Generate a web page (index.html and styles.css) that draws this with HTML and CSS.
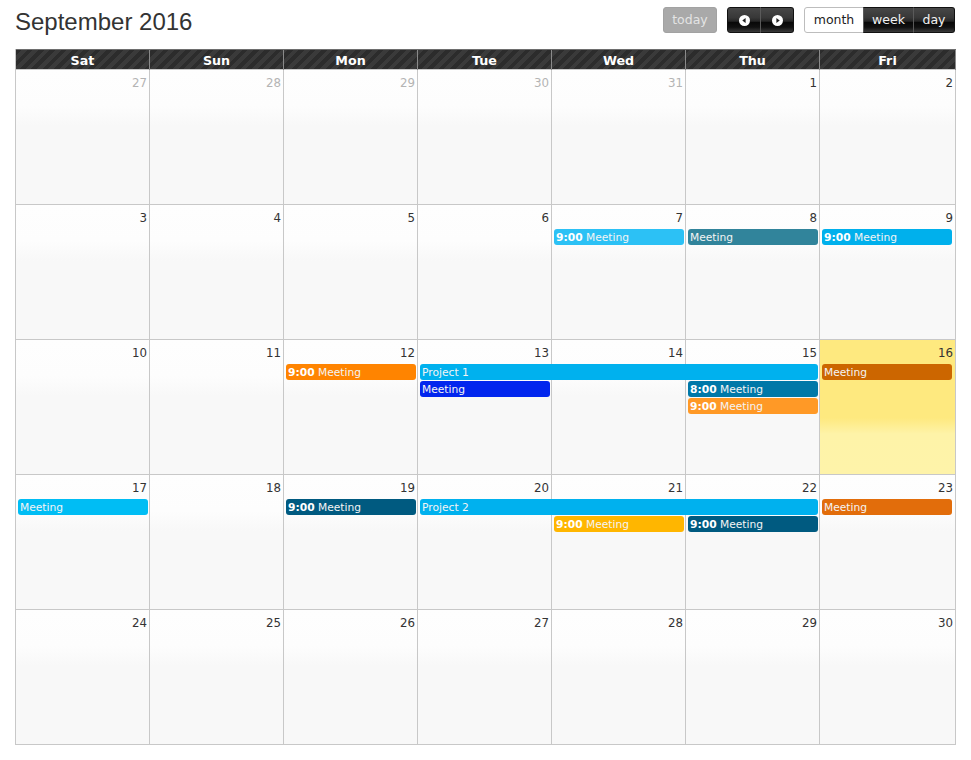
FILE: index.html
```html
<!DOCTYPE html>
<html>
<head>
<meta charset="utf-8">
<link rel="stylesheet" href="styles.css">
</head>
<body>
<div class="cal">
  <div class="toolbar">
    <h2 class="title">September 2016</h2>
    <div class="controls">
      <button class="btn today">today</button>
      <div class="group">
        <button class="btn dark nav"><svg width="11" height="11" viewBox="0 0 11 11"><circle cx="5.5" cy="5.5" r="5.5" fill="#fff"/><polygon points="3.3,5.5 6.6,3 6.6,8" fill="#222"/></svg></button>
        <button class="btn dark nav"><svg width="11" height="11" viewBox="0 0 11 11"><circle cx="5.5" cy="5.5" r="5.5" fill="#fff"/><polygon points="7.7,5.5 4.4,3 4.4,8" fill="#222"/></svg></button>
      </div>
      <div class="group">
        <button class="btn light">month</button>
        <button class="btn dark">week</button>
        <button class="btn dark">day</button>
      </div>
    </div>
  </div>

  <div class="grid">
    <div class="head">
      <div>Sat</div><div>Sun</div><div>Mon</div><div>Tue</div><div>Wed</div><div>Thu</div><div>Fri</div>
    </div>

    <div class="week">
      <div class="bg c1"></div><div class="bg c2"></div><div class="bg c3"></div><div class="bg c4"></div><div class="bg c5"></div><div class="bg c6"></div><div class="bg c7"></div>
      <div class="num other c1">27</div><div class="num other c2">28</div><div class="num other c3">29</div><div class="num other c4">30</div><div class="num other c5">31</div><div class="num c6">1</div><div class="num c7">2</div>
    </div>

    <div class="week">
      <div class="bg c1"></div><div class="bg c2"></div><div class="bg c3"></div><div class="bg c4"></div><div class="bg c5"></div><div class="bg c6"></div><div class="bg c7"></div>
      <div class="num c1">3</div><div class="num c2">4</div><div class="num c3">5</div><div class="num c4">6</div><div class="num c5">7</div><div class="num c6">8</div><div class="num c7">9</div>
      <div class="ev c5 r2 e-sky"><b>9:00</b> Meeting</div>
      <div class="ev c6 r2 e-teal">Meeting</div>
      <div class="ev c7 r2 e-cyan"><b>9:00</b> Meeting</div>
    </div>

    <div class="week">
      <div class="bg c1"></div><div class="bg c2"></div><div class="bg c3"></div><div class="bg c4"></div><div class="bg c5"></div><div class="bg c6"></div><div class="bg c7 today-bg"></div>
      <div class="num c1">10</div><div class="num c2">11</div><div class="num c3">12</div><div class="num c4">13</div><div class="num c5">14</div><div class="num c6">15</div><div class="num c7">16</div>
      <div class="ev c3 r2 e-orange"><b>9:00</b> Meeting</div>
      <div class="ev c4 span3 r2 e-project">Project 1</div>
      <div class="ev c7 r2 e-brown">Meeting</div>
      <div class="ev c4 r3 e-blue">Meeting</div>
      <div class="ev c6 r3 e-ocean"><b>8:00</b> Meeting</div>
      <div class="ev c6 r4 e-amber"><b>9:00</b> Meeting</div>
    </div>

    <div class="week">
      <div class="bg c1"></div><div class="bg c2"></div><div class="bg c3"></div><div class="bg c4"></div><div class="bg c5"></div><div class="bg c6"></div><div class="bg c7"></div>
      <div class="num c1">17</div><div class="num c2">18</div><div class="num c3">19</div><div class="num c4">20</div><div class="num c5">21</div><div class="num c6">22</div><div class="num c7">23</div>
      <div class="ev c1 r2 e-light">Meeting</div>
      <div class="ev c3 r2 e-navy"><b>9:00</b> Meeting</div>
      <div class="ev c4 span3 r2 e-project">Project 2</div>
      <div class="ev c7 r2 e-rust">Meeting</div>
      <div class="ev c5 r3 e-yellow"><b>9:00</b> Meeting</div>
      <div class="ev c6 r3 e-navy"><b>9:00</b> Meeting</div>
    </div>

    <div class="week">
      <div class="bg c1"></div><div class="bg c2"></div><div class="bg c3"></div><div class="bg c4"></div><div class="bg c5"></div><div class="bg c6"></div><div class="bg c7"></div>
      <div class="num c1">24</div><div class="num c2">25</div><div class="num c3">26</div><div class="num c4">27</div><div class="num c5">28</div><div class="num c6">29</div><div class="num c7">30</div>
    </div>
  </div>
</div>
</body>
</html>
```

FILE: styles.css
```css
html, body {
  margin: 0;
  padding: 0;
  background: #fff;
}

.cal {
  padding: 7px 16px 0 15px;
  font-family: "DejaVu Sans", Verdana, sans-serif;
}

.toolbar {
  display: flex;
  justify-content: space-between;
  align-items: flex-start;
  height: 26px;
  margin-bottom: 16px;
}

.title {
  margin: 0;
  font-family: "Liberation Sans", Arial, sans-serif;
  font-weight: normal;
  font-size: 24px;
  line-height: 29px;
  color: #333;
}

.controls {
  display: flex;
  gap: 10px;
}

.group {
  display: flex;
}

.btn {
  height: 26px;
  margin: 0;
  padding: 0 8px;
  font-family: "DejaVu Sans", Verdana, sans-serif;
  font-size: 12.5px;
  line-height: 24px;
  border: 1px solid #9c9c9c;
  border-radius: 3px;
  cursor: pointer;
}

.btn.today {
  width: 54px;
  padding: 0;
  background: #a9a9a9;
  border-color: #a2a2a2;
  color: #e4e4e4;
}

.btn.dark {
  color: #f2f2f2;
  border-color: #111;
  background: linear-gradient(#474747 0%, #383838 40%, #262626 55%, #080808 60%, #111 80%, #3a3a3a 100%);
}

.btn.light {
  color: #222;
  background: #fff;
  border-color: #bdbdbd;
  width: 60px;
  padding: 0;
}

.group .btn {
  border-radius: 0;
}

.group .btn + .btn {
  border-left-color: #5a5a5a;
  margin-left: -1px;
}

.group .btn:first-child {
  border-radius: 3px 0 0 3px;
}

.group .btn:last-child {
  border-radius: 0 3px 3px 0;
}

.btn.nav {
  width: 34px;
  padding: 0;
  display: flex;
  align-items: center;
  justify-content: center;
}

.group .btn.dark:nth-child(2) {
  width: 51px;
  padding: 0;
}

.group .btn.dark:nth-child(3) {
  width: 42px;
  padding: 0;
}

.group .btn.nav:nth-child(2) {
  width: 34px;
}

.grid {
  border-left: 1px solid #c8c8c8;
  width: 940px;
}

.head {
  display: grid;
  grid-template-columns: repeat(6, 134px) 136px;
  height: 19px;
  border-top: 1px solid #6e6e6e;
  border-bottom: 1px solid #c8c8c8;
  background: repeating-linear-gradient(135deg, #2c2c2c 0 4px, #3a3a3a 4px 8px);
}

.head div {
  box-sizing: border-box;
  border-right: 1px solid #8a8a8a;
  color: #fff;
  font-weight: bold;
  font-size: 12.7px;
  line-height: 21px;
  text-align: center;
}

.week {
  display: grid;
  grid-template-columns: repeat(6, 134px) 136px;
  grid-template-rows: 23px 17px 17px 17px 1fr;
  height: 134px;
  border-bottom: 1px solid #c8c8c8;
}

.bg {
  grid-row: 1 / -1;
  box-sizing: border-box;
  border-right: 1px solid #c8c8c8;
  background: linear-gradient(#fefefe 0, #fdfdfd 36px, #f8f8f8 56px, #f8f8f8 100%);
}

.bg.today-bg {
  background: linear-gradient(#fee97f 0, #fee97f 78px, #fef3a8 94px, #fef3a9 100%);
}

.c1 { grid-column: 1; }
.c2 { grid-column: 2; }
.c3 { grid-column: 3; }
.c4 { grid-column: 4; }
.c5 { grid-column: 5; }
.c6 { grid-column: 6; }
.c7 { grid-column: 7; }
.c4.span3 { grid-column: 4 / span 3; }

.num {
  grid-row: 1;
  padding: 6px 3px 0 0;
  text-align: right;
  font-size: 11.8px;
  line-height: 14px;
  color: #333;
}

.num.other {
  color: #b4b4b4;
}

.r2 { grid-row: 2; }
.r3 { grid-row: 3; }
.r4 { grid-row: 4; }

.ev {
  align-self: start;
  box-sizing: border-box;
  height: 16px;
  margin: 1px 2px 0 2px;
  padding: 1px 2px 0;
  border-radius: 3px;
  color: #f4f4f4;
  font-size: 10.7px;
  line-height: 15px;
  white-space: nowrap;
  overflow: hidden;
}

.ev b {
  color: #fff;
}

.c7.ev { margin-right: 4px; }

.e-sky { background: #2cc1f5; }
.e-teal { background: #31849b; }
.e-cyan { background: #00b0ec; }
.e-orange { background: #ff8400; }
.e-project { background: #00b1ee; }
.e-blue { background: #0226ee; }
.e-ocean { background: #0078a8; }
.e-amber { background: #ff9926; }
.e-brown { background: #cc6600; }
.e-light { background: #00bdf4; }
.e-navy { background: #005a80; }
.e-rust { background: #e26d0b; }
.e-yellow { background: #ffb600; }
```
